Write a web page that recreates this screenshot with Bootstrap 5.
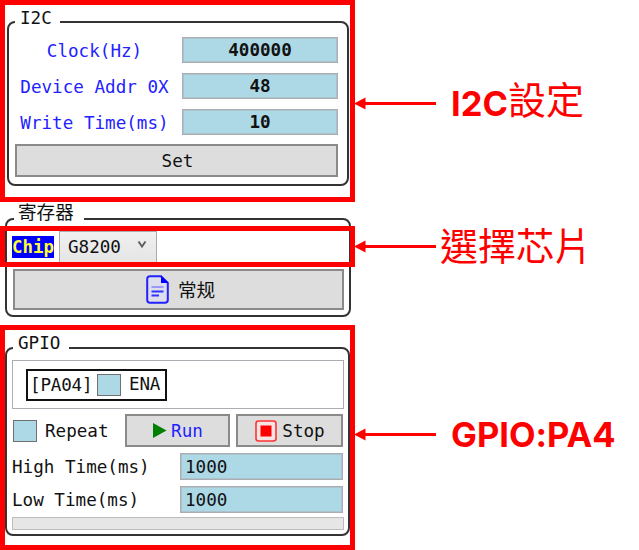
<!DOCTYPE html>
<html lang="zh-Hant">
<head>
<meta charset="utf-8">
<meta name="viewport" content="width=device-width, initial-scale=1">
<title>I2C / GPIO</title>
<link href="https://cdn.jsdelivr.net/npm/bootstrap@5.3.0/dist/css/bootstrap.min.css" rel="stylesheet">
<style>
body{width:639px;height:550px;overflow:hidden;background:#fff;color:#111;font:17.6px/22px "DejaVu Sans Mono","Noto Sans CJK SC",monospace}
.frame{width:355px;flex:none}
.marked{border:5px solid #f00}
.group{position:relative;border:2px solid #333;border-radius:8px}
.caption-text{position:absolute;top:-16px;background:#fff;line-height:22px;height:22px;white-space:nowrap}
.field{height:27px;border:1px solid #abadb3;outline:1px solid #abadb380;outline-offset:-2px;border-radius:0;background:#add8e6;color:#111;font:inherit;line-height:25px;padding:0 5px}
.set-row{display:grid;grid-template-columns:173px 156px;height:36px;color:#22f}
.set-row label{padding:3px 2px 0 0}
.set-row .field{font-weight:700;text-align:center;height:26px;padding:0}
.key{background:#ddd;border:2px solid #8a8a8a;border-radius:0;color:#111;font:inherit;padding:0;display:flex;align-items:center;justify-content:center}
.key:hover{background:#ddd}
.tick{background:#add8e6;border:1px solid #707070;width:24px;height:22px;flex:none}
.chip-name{background:#00f;color:#ff3;width:42px;height:22px;font-weight:700;font-size:17.4px;line-height:23px}
.combo{width:98px;height:32px;border:1px solid #acacac;background:linear-gradient(#f0f0f0,#e5e5e5);padding:0 9px 0 8px}
.chip-mark{position:absolute;left:-7px;top:6px;width:355px;height:41px}
.pins{height:49px;border:1px solid #abadb3;padding:8px 0 0 13px}
.pin{width:141px;height:32px;border:2px solid #111;padding-left:2px}
.time-row{display:grid;grid-template-columns:168px 163px;height:33px}
.time-row .field{padding-left:4px}
.meter{height:13px;background:#e6e6e6;border:1px solid #bcbcbc}
.note{color:#f00;font:700 34.5px/44px Inter,"Noto Sans CJK TC",sans-serif;font-feature-settings:"calt" 0;white-space:nowrap}
.note .han{font-weight:400;font-size:38px;font-family:"Noto Sans CJK TC",sans-serif;position:relative;top:-2px}
.arrow{flex:none;width:82px;height:13px;margin-left:-1px}
</style>
<script src="https://cdn.jsdelivr.net/npm/bootstrap@5.3.0/dist/js/bootstrap.bundle.min.js"></script>
</head>
<body>
<div class="d-flex" style="height:202px">
  <section class="frame marked" style="padding:16px 1px 0 2px">
    <div class="group" style="height:165px;padding:14px 0 0 0">
      <span class="caption-text" style="left:6px;width:45px;padding-left:5px">I2C</span>
      <div class="set-row"><label class="text-center">Clock(Hz)</label><input class="field" value="400000"></div>
      <div class="set-row"><label class="text-center">Device Addr 0X</label><input class="field" value="48"></div>
      <div class="set-row"><label class="text-center">Write Time(ms)</label><input class="field" value="10"></div>
      <button class="btn key" style="margin:-1px 0 0 6px;width:323px;height:33px;padding-left:2px">Set</button>
    </div>
  </section>
  <svg class="arrow" style="margin-top:97px" viewBox="0 0 82 13"><path d="M0 6.5L11.5 .5V12.5Z" fill="#f00"/><path d="M10 6.5H82" stroke="#f00" stroke-width="3"/></svg>
  <div class="note" style="margin:78px 0 0 15px">I2C<span class="han">設定</span></div>
</div>
<div class="d-flex" style="height:123px">
  <section class="frame" style="padding:16px 4px 0 5px">
    <div class="group" style="height:99px;padding:11px 0 0 5px">
      <span class="caption-text" style="left:7px;width:70px;padding-left:4px;font-size:18.6px;top:-18px">寄存器</span>
      <div class="d-flex align-items-center">
        <span class="chip-name">Chip</span>
        <div class="combo d-flex align-items-center justify-content-between" style="margin-left:5px">G8200
          <svg width="10" height="9" viewBox="0 0 10 9" style="margin:-5px 0 0 0"><path d="M1.5 1.5L5 6.5L8.5 1.5" fill="none" stroke="#606060" stroke-width="2"/></svg></div>
      </div>
      <button class="btn key" style="margin:6px 0 0 1px;width:331px;height:41px;padding-left:4px">
        <svg width="23" height="29" viewBox="0 0 23 29"><path d="M15 1.2H4Q1.2 1.2 1.2 4V25Q1.2 27.8 4 27.8H19Q21.8 27.8 21.8 25V8Z" fill="#dde" stroke="#22f" stroke-width="2"/><path d="M15 .5V8H22.5Z" fill="#00f"/><path d="M5.5 12H17.5" stroke="#99f" stroke-width="2"/><path d="M5.5 16.5H17.5M5.5 20.5H13" stroke="#33f" stroke-width="2"/></svg>
        <span style="font-size:18.6px;margin:2px 0 0 9px">常规</span></button>
      <div class="marked chip-mark"></div>
    </div>
  </section>
  <svg class="arrow" style="margin-top:38px" viewBox="0 0 82 13"><path d="M0 6.5L11.5 .5V12.5Z" fill="#f00"/><path d="M10 6.5H82" stroke="#f00" stroke-width="3"/></svg>
  <div class="note" style="margin:22px 0 0 4px"><span class="han">選擇芯片</span></div>
</div>
<div class="d-flex" style="height:225px">
  <section class="frame marked" style="padding:17px 0 0 0">
    <div class="group" style="height:189px;padding:11px 4px 0 5px">
      <span class="caption-text" style="left:6px;width:56px;padding-left:5px;top:-17px">GPIO</span>
      <div class="pins"><div class="pin d-flex align-items-center"><span style="width:64px;letter-spacing:-.2px;white-space:nowrap">[PA04]</span><span class="tick" style="margin-left:3px"></span><span style="margin:-3px 0 0 8px;letter-spacing:-.2px">ENA</span></div></div>
      <div class="d-flex align-items-center" style="margin-top:5px;height:33px"><span class="tick" style="margin-left:1px"></span><span style="margin-left:8px;width:80px">Repeat</span>
        <button class="btn key" style="width:105px;height:33px;color:#22f"><svg width="15" height="17" viewBox="0 0 15 17" style="margin-right:4px"><path d="M1 1L14.5 8.5L1 16Z" fill="#008000"/></svg>Run</button>
        <button class="btn key" style="width:107px;height:33px;margin-left:6px;padding-left:1px"><svg width="22" height="22" viewBox="0 0 22 22" style="margin-right:5px"><rect x="1" y="1" width="20" height="20" rx="2.5" fill="#f4e4e4" stroke="#f33" stroke-width="1.6"/><path d="M5.5 5.5H16.500V16.500H5.500Z" fill="#f00"/></svg>Stop</button>
      </div>
      <div class="time-row" style="margin-top:6px"><label style="padding-top:3px">High Time(ms)</label><input class="field" value="1000"></div>
      <div class="time-row" style="height:31px"><label style="padding-top:3px">Low Time(ms)</label><input class="field" value="1000"></div>
      <div class="meter"></div>
    </div>
  </section>
  <svg class="arrow" style="margin-top:103px" viewBox="0 0 82 13"><path d="M0 6.5L11.5 .5V12.5Z" fill="#f00"/><path d="M10 6.5H82" stroke="#f00" stroke-width="3"/></svg>
  <div class="note" style="margin:88px 0 0 15px">GPIO:PA4</div>
</div>
</body>
</html>
